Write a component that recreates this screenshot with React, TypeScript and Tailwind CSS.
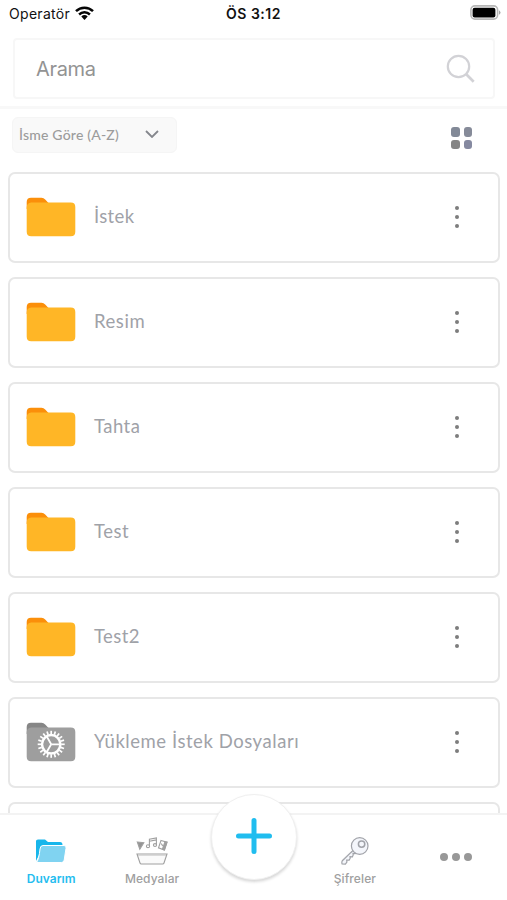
import type { ReactNode } from "react";

type Folder = { name: string; tracking: string; system?: boolean };

const folders: Folder[] = [
  { name: "İstek", tracking: "tracking-[0.35px]" },
  { name: "Resim", tracking: "tracking-[0.55px]" },
  { name: "Tahta", tracking: "tracking-[0.45px]" },
  { name: "Test", tracking: "tracking-[0.5px]" },
  { name: "Test2", tracking: "tracking-[0.4px]" },
  { name: "Yükleme İstek Dosyaları", tracking: "tracking-[0.55px]", system: true },
];

// Angles of the gear teeth, evenly spread over the rim
const teeth = Array.from({ length: 20 }, (_, i) => i * 18);

function FolderIcon({ system = false }: { system?: boolean }) {
  return (
    <svg className="h-10 w-[50px] shrink-0" viewBox="0 0 50 40">
      <path
        d="M.7 12V5Q.7.7 5 .7h10.5q2.2 0 3.7 1.7L22.5 6v7z"
        fill={system ? "#868686" : "#fb8f0a"}
      />
      <path
        d="M.7 10.5Q.7 6 5.2 5.6h39.6q4.5 0 4.5 4.4v24.8q0 4.5-4.5 4.5H5.2q-4.5 0-4.5-4.5z"
        fill={system ? "#9e9e9e" : "#ffb626"}
      />
      {system && (
        <g transform="translate(25.2 22.3)" fill="none" stroke="#fff">
          <circle r="9.2" strokeWidth="2.5" />
          {teeth.map((angle) => (
            <path key={angle} d="M0-10v-3.5" strokeWidth="1.7" transform={`rotate(${angle})`} />
          ))}
          <path d="M0 0h9M0 0l-4.6-8M0 0l-4.6 8" strokeWidth="1.8" />
        </g>
      )}
    </svg>
  );
}

function FolderCard({ folder }: { folder: Folder }) {
  return (
    <li className="flex h-[91px] shrink-0 items-center rounded-[7px] border-2 border-[#e7e7e7] bg-white pb-[2px] pl-4">
      <FolderIcon system={folder.system} />
      <span
        className={`ml-[18px] flex-1 whitespace-nowrap text-[18.5px] text-[#9fa2a8] ${folder.tracking}`}
      >
        {folder.name}
      </span>
      <button className="mr-[37px] flex w-2 flex-col items-center gap-[5px]">
        <span className="size-1 rounded-full bg-[#7d7d7d]" />
        <span className="size-1 rounded-full bg-[#7d7d7d]" />
        <span className="size-1 rounded-full bg-[#7d7d7d]" />
      </button>
    </li>
  );
}

function StatusBar() {
  return (
    <div className="grid h-[38px] shrink-0 grid-cols-3 items-start pt-[5px] font-['Inter','Liberation_Sans',sans-serif] text-[14px] leading-[18px] text-[#111]">
      <div className="flex items-center gap-[5px] pl-[9px] tracking-[0.3px]">
        Operatör
        <svg className="mt-[-2px] h-[14px] w-[19px]" viewBox="0 0 19 14">
          <g fill="none" stroke="#050505" strokeWidth="2.5">
            <path d="M1 5.2a12.2 12.2 0 0 1 17 0" />
            <path d="M4.1 8.5a7.8 7.8 0 0 1 10.8 0" />
          </g>
          <path d="M6.3 10.6a4.7 4.7 0 0 1 6.4 0L9.5 14z" fill="#050505" />
        </svg>
      </div>
      <div className="text-center font-semibold tracking-[0.5px]">ÖS 3:12</div>
      <div className="flex justify-end pr-[6px]">
        <svg className="h-[15px] w-[31px]" viewBox="0 0 31 15">
          <rect x=".9" y=".9" width="26.7" height="13.2" rx="4" fill="#fff" stroke="#b7b7b7" strokeWidth="1.6" />
          <rect x="2.6" y="2.8" width="22.8" height="9.6" rx="2" />
          <path d="M29 5.2q3 2.3 0 4.6z" fill="#a7a7a7" />
        </svg>
      </div>
    </div>
  );
}

function SearchHeader() {
  return (
    <header className="h-[71px] shrink-0 border-b-[3px] border-[#f8f8f8] pl-[13px] pr-3">
      <label className="flex h-[61px] items-center rounded border-2 border-[#f7f7f7] pl-[21px] pr-[18px] font-['Inter','Liberation_Sans',sans-serif] text-[20px] tracking-[-0.35px] text-[#939393]">
        <span className="flex-1">Arama</span>
        <svg className="size-[29px]" viewBox="0 0 29 29" fill="none" stroke="#d2d2d6" strokeWidth="2.2">
          <circle cx="12.5" cy="12.5" r="10.7" />
          <path d="m20 20 7.7 7.7" strokeWidth="2.7" />
        </svg>
      </label>
    </header>
  );
}

function Toolbar() {
  return (
    <div className="flex h-[63px] shrink-0 items-start pl-3 pr-[35px] pt-2">
      <button className="flex h-9 w-[165px] items-center justify-between rounded-md border border-[#f5f5f5] bg-[#f9f9f9] pb-[2px] pl-[6px] pr-[17px] text-[14px] font-medium tracking-[0.2px] text-[#9c9c9c]">
        İsme Göre (A-Z)
        <svg className="h-2 w-[14px]" viewBox="0 0 14 8" fill="none" stroke="#85878d" strokeWidth="1.8">
          <path d="m1 1 6 6 6-6" />
        </svg>
      </button>
      <button className="ml-auto mt-[10px] grid grid-cols-2 gap-x-1 gap-y-[3px]">
        <span className="h-[9.5px] w-[8.5px] rounded-[3px] bg-[#828997]" />
        <span className="h-[9.5px] w-[8.5px] rounded-[3px] bg-[#868b99]" />
        <span className="h-[9.5px] w-[8.5px] rounded-[3px] bg-[#858585]" />
        <span className="h-[9.5px] w-[8.5px] rounded-[3px] bg-[#8589a0]" />
      </button>
    </div>
  );
}

function NavItem({ label, children, active = false }: { label: string; children: ReactNode; active?: boolean }) {
  return (
    <button className="flex flex-col items-center pt-[19px]">
      <span className="flex h-[34px] items-center">{children}</span>
      <span
        className={
          active
            ? "ml-px mt-[3px] text-[12px] font-semibold leading-4 text-[#25bdef]"
            : "mt-[3px] text-[12px] font-medium leading-4 tracking-[0.1px] text-[#a0a0a0]"
        }
      >
        {label}
      </span>
    </button>
  );
}

function BottomNav() {
  return (
    <nav className="relative grid h-[87px] shrink-0 grid-cols-5 border-t-2 border-[#f3f3f3] bg-white font-['Inter','Liberation_Sans',sans-serif]">
      <NavItem label="Duvarım" active>
        <svg className="h-6 w-8" viewBox="0 0 32 24">
          <path d="M1 22V2Q1 .5 3 .5h7L13 3h12q2.5 0 2.5 3v4H7z" fill="#18b6eb" />
          <path d="M8 6.5h21q2.5 0 2 2.8l-1.8 11.8q-.4 2.4-2.8 2.4H1.5Q4 20 5 10q.3-3.5 3-3.5z" fill="#80d3f1" stroke="#fff" strokeWidth="1" />
        </svg>
      </NavItem>
      <NavItem label="Medyalar">
        <svg className="h-7 w-8" viewBox="0 0 32 28" fill="none" stroke="#a0a0a0" strokeWidth="1.1">
          <path d="m1.3 5 6.5.8-4 6.4z" fill="#959595" />
          <path d="M13.4 9V2.3l7-1.3v6.8M13.4 4.2l7-1.3" />
          <ellipse cx="12" cy="9.2" rx="1.6" ry="1.4" />
          <ellipse cx="19" cy="8" rx="1.6" ry="1.4" />
          <path d="m25 3.5 6 1.7-2.6 7.8-5.9-2.2z" />
          <path d="m29 4.7 2 .5-2.6 7.8-2-.8z" fill="#a0a0a0" />
          <path d="m25.2 6.5 1.5 2.4" />
          <path d="M1 17h30l-3 9q-.3 1-1.4 1H5.4Q4.3 27 4 26z" fill="#fafafa" />
          <path d="M2 18.5h28" stroke="#ccc" strokeWidth=".7" />
        </svg>
      </NavItem>
      <span />
      <NavItem label="Şifreler">
        <svg className="h-7 w-7" viewBox="0 0 28 28" fill="#f4f6fb" stroke="#a1a3a9" strokeWidth="1.2">
          <path d="M12 13.5 1.3 23.7q-.8 1.5-.2 3.3l3.3.2 1.5-2.1-.2-2 2.5.1 1-2-.2-1.5 2.4.2.8-2-.2-1.4 2.2.2 2.2-2.1z" />
          <circle cx="18.7" cy="9" r="8.3" />
          <circle cx="20.6" cy="7.1" r="3.2" strokeWidth="1.5" />
          <path d="m10 16-7.3 7" stroke="#c1c3c8" strokeWidth=".8" />
        </svg>
      </NavItem>
      <button className="flex items-start justify-center gap-1 pt-[38px]">
        <span className="size-2 rounded-full bg-[#989898]" />
        <span className="size-2 rounded-full bg-[#989898]" />
        <span className="size-2 rounded-full bg-[#989898]" />
      </button>
      {/* Floating add button */}
      <button className="absolute left-[211px] top-[-21px] flex size-[86px] items-center justify-center rounded-full border border-[#f0f0f0] bg-white shadow-[0_2px_3px_rgba(0,0,0,0.16)]">
        <svg className="mt-[-2px] size-[38px]" viewBox="0 0 38 38" stroke="#20bdef" strokeWidth="5" strokeLinecap="round">
          <path d="M19 3.5v31M3.5 19h31" />
        </svg>
      </button>
    </nav>
  );
}

export default function App() {
  return (
    <div className="flex h-[900px] w-[507px] flex-col overflow-hidden bg-white font-['Lato','Liberation_Sans',sans-serif]">
      <StatusBar />
      <SearchHeader />
      <Toolbar />
      <ul className="flex min-h-0 flex-1 flex-col gap-[14px] overflow-hidden pl-2 pr-[7px]">
        {folders.map((folder) => (
          <FolderCard key={folder.name} folder={folder} />
        ))}
        <li className="h-[91px] shrink-0 rounded-[7px] border-2 border-[#e7e7e7]" />
      </ul>
      <BottomNav />
    </div>
  );
}
